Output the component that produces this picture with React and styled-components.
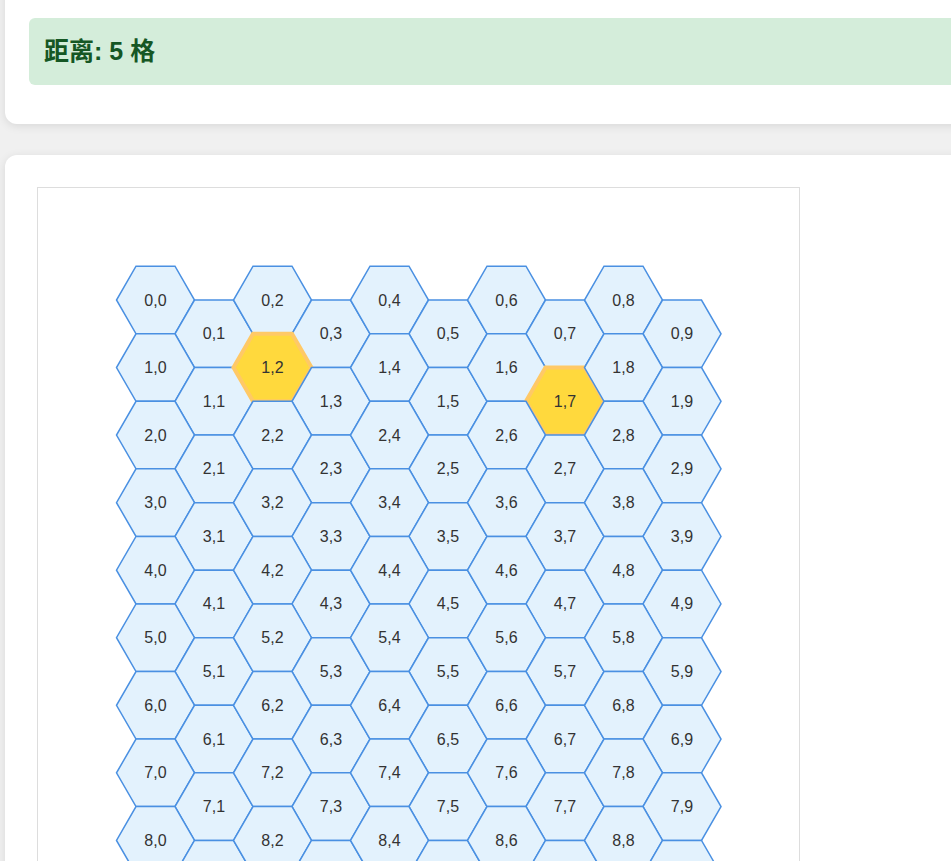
import React from "react";
import styled, { createGlobalStyle } from "styled-components";

const GlobalStyle = createGlobalStyle`
  html, body {
    margin: 0;
    padding: 0;
    background: #f0f0f0;
    overflow-x: hidden;
  }
  body {
    font-family: "Liberation Sans", "Noto Sans CJK SC", Arial, sans-serif;
    color: #333;
  }
`;

const ROWS = 10;
const COLS = 10;
const HEX_R = 39;
const ORIGIN_X = 117.5;
const ORIGIN_Y = 112;

const start = { row: 1, col: 2 };
const target = { row: 1, col: 7 };

const Page = styled.div`
  width: 1100px;
  margin-top: -20px;
  padding: 0 5px;
  display: flex;
  flex-direction: column;
  gap: 31px;
`;

const Card = styled.section`
  background: #fff;
  border-radius: 12px;
  box-shadow: 0 2px 10px rgba(0, 0, 0, 0.1);
  padding: ${(p) => p.$pad};
`;

const ResultBox = styled.div`
  background: #d4edda;
  color: #155724;
  border-radius: 6px;
  padding: 16px 15px;
  margin-bottom: 15px;
  font-size: 25px;
  line-height: 35px;
  font-weight: 700;
`;

const Board = styled.div`
  display: inline-block;
  border: 1px solid #ddd;
  background: #fff;
  line-height: 0;
`;

const Cell = styled.polygon`
  fill: ${(p) => (p.$marked ? "#ffd93d" : "#e3f2fd")};
  stroke: ${(p) => (p.$marked ? "#ffc966" : "#4a90e2")};
  stroke-width: ${(p) => (p.$marked ? 4 : 1.5)};
`;

const Label = styled.text`
  font-family: "Liberation Sans", Arial, sans-serif;
  font-size: 16px;
  fill: #333;
  text-anchor: middle;
  dominant-baseline: central;
`;

function hexCenter(row, col) {
  const x = ORIGIN_X + col * HEX_R * 1.5;
  const y = ORIGIN_Y + row * HEX_R * Math.sqrt(3) + (col % 2 ? (HEX_R * Math.sqrt(3)) / 2 : 0);
  return { x, y };
}

function hexPoints(cx, cy) {
  const pts = [];
  for (let i = 0; i < 6; i++) {
    const a = (Math.PI / 3) * i;
    pts.push(`${(cx + HEX_R * Math.cos(a)).toFixed(2)},${(cy + HEX_R * Math.sin(a)).toFixed(2)}`);
  }
  return pts.join(" ");
}

// odd-q offset -> cube distance
function toCube(row, col) {
  const x = col;
  const z = row - (col - (col & 1)) / 2;
  return { x, y: -x - z, z };
}

function hexDistance(a, b) {
  const ca = toCube(a.row, a.col);
  const cb = toCube(b.row, b.col);
  return Math.max(Math.abs(ca.x - cb.x), Math.abs(ca.y - cb.y), Math.abs(ca.z - cb.z));
}

function HexGrid() {
  const cells = [];
  for (let r = 0; r < ROWS; r++) {
    for (let c = 0; c < COLS; c++) {
      const { x, y } = hexCenter(r, c);
      const marked =
        (r === start.row && c === start.col) || (r === target.row && c === target.col);
      cells.push(
        <g key={`${r}-${c}`}>
          <Cell points={hexPoints(x, y)} $marked={marked} />
          <Label x={x} y={y}>
            {r},{c}
          </Label>
        </g>
      );
    }
  }
  return (
    <svg width="761" height="860">
      {cells}
    </svg>
  );
}

export default function App() {
  const dist = hexDistance(start, target);
  return (
    <>
      <GlobalStyle />
      <Page>
        <Card $pad="38px 24px 24px">
          <ResultBox>距离: {dist} 格</ResultBox>
        </Card>
        <Card $pad="32px 32px">
          <Board>
            <HexGrid />
          </Board>
        </Card>
      </Page>
    </>
  );
}
